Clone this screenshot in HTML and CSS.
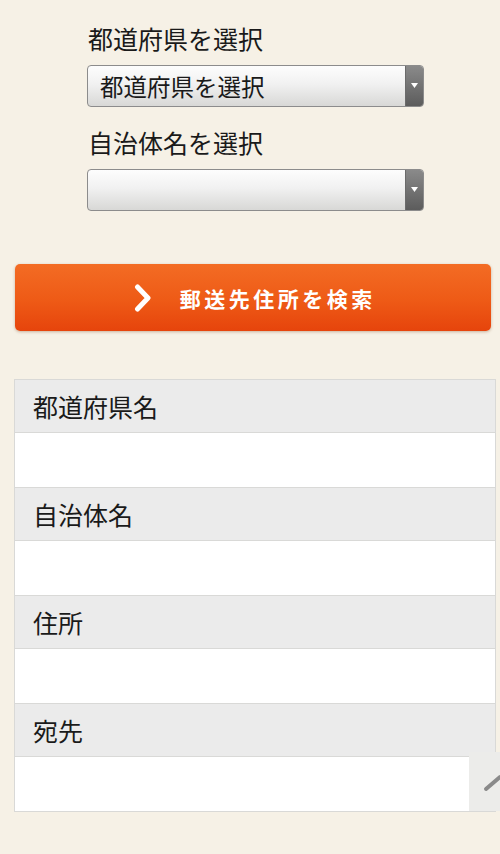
FILE: index.html
```html
<!DOCTYPE html>
<html lang="ja">
<head>
<meta charset="utf-8">
<link rel="stylesheet" href="styles.css">
</head>
<body>
<div class="page">
  <form class="search">
    <div class="field">
      <div class="label">都道府県を選択</div>
      <div class="select">
        <span class="select-text">都道府県を選択</span>
        <span class="select-arrow"><svg width="7" height="5" viewBox="0 0 7 5"><path d="M0 0H7L3.5 5Z" fill="#fff"/></svg></span>
      </div>
    </div>
    <div class="field">
      <div class="label">自治体名を選択</div>
      <div class="select">
        <span class="select-text"></span>
        <span class="select-arrow"><svg width="7" height="5" viewBox="0 0 7 5"><path d="M0 0H7L3.5 5Z" fill="#fff"/></svg></span>
      </div>
    </div>
  </form>
  <div class="btn-wrap">
    <button class="btn" type="button">
      <svg class="chev" width="18" height="30" viewBox="0 0 18 30"><path d="M3.5 4L14 15L3.5 26" fill="none" stroke="#fff" stroke-width="5" stroke-linecap="round" stroke-linejoin="round"/></svg>
      <span class="btn-text">郵送先住所を検索</span>
    </button>
  </div>
  <div class="result">
    <div class="rh">都道府県名</div>
    <div class="rd"></div>
    <div class="rh">自治体名</div>
    <div class="rd"></div>
    <div class="rh">住所</div>
    <div class="rd"></div>
    <div class="rh">宛先</div>
    <div class="rd"></div>
  </div>
</div>
<a class="totop" href="#"><svg width="40" height="30" viewBox="0 0 40 30"><path d="M6 22L20 10L34 22" fill="none" stroke="#8a8a8a" stroke-width="4" stroke-linecap="round" stroke-linejoin="round"/></svg></a>
</body>
</html>
```
FILE: styles.css
```css
html, body {
  margin: 0;
  padding: 0;
  background: #f6f1e6;
}
body {
  font-family: "Noto Sans CJK JP", "Noto Sans", sans-serif;
  color: #1a1a1a;
}
.page {
  padding-top: 21px;
  padding-bottom: 40px;
}
.search {
  padding: 0 76px 0 87px;
  display: flex;
  flex-direction: column;
  gap: 18px;
}
.field {
  display: flex;
  flex-direction: column;
  gap: 10px;
}
.label {
  font-size: 25px;
  line-height: 34px;
  padding-left: 1px;
}
.select {
  height: 40px;
  border: 1px solid #8c8c8c;
  border-radius: 4px;
  background: linear-gradient(#fdfdfd, #f1f1f1 45%, #d8d8d6);
  display: flex;
  align-items: center;
  overflow: hidden;
}
.select-text {
  flex: 1;
  font-size: 23.5px;
  line-height: 40px;
  padding-left: 12px;
  color: #1a1a1a;
}
.select-arrow {
  width: 17px;
  align-self: stretch;
  background: linear-gradient(#8a8a8a, #5c5c5c);
  border-left: 1px solid #6b6b6b;
  display: flex;
  align-items: center;
  justify-content: center;
  padding-bottom: 2px;
}
.btn-wrap {
  padding: 53px 9px 0 15px;
}
.btn {
  width: 100%;
  height: 67px;
  border: none;
  border-radius: 5px;
  background: linear-gradient(#f36c24, #ee5a16 55%, #e6440c);
  box-shadow: 0 1px 3px rgba(120, 60, 20, 0.35);
  display: flex;
  align-items: center;
  justify-content: center;
  gap: 28px;
  padding: 0;
  font-family: inherit;
  cursor: pointer;
}
.btn-text {
  color: #fff;
  font-weight: 700;
  font-size: 21px;
  letter-spacing: 3.5px;
  line-height: 30px;
  margin-right: -3.5px;
}
.result {
  margin: 48px 4px 0 14px;
  border: 1px solid #d9d9d7;
  background: #fff;
  display: flex;
  flex-direction: column;
}
.rh {
  height: 52px;
  background: #ebebeb;
  border-bottom: 1px solid #d9d9d7;
  font-size: 25px;
  line-height: 52px;
  padding-left: 18px;
  color: #1a1a1a;
}
.rd {
  height: 54px;
  background: #fff;
  border-bottom: 1px solid #d9d9d7;
}
.rd:last-child {
  border-bottom: none;
}
.totop {
  position: fixed;
  left: 469px;
  top: 752px;
  width: 62px;
  height: 59px;
  background: #ececea;
  display: flex;
  align-items: center;
  justify-content: center;
}
```
